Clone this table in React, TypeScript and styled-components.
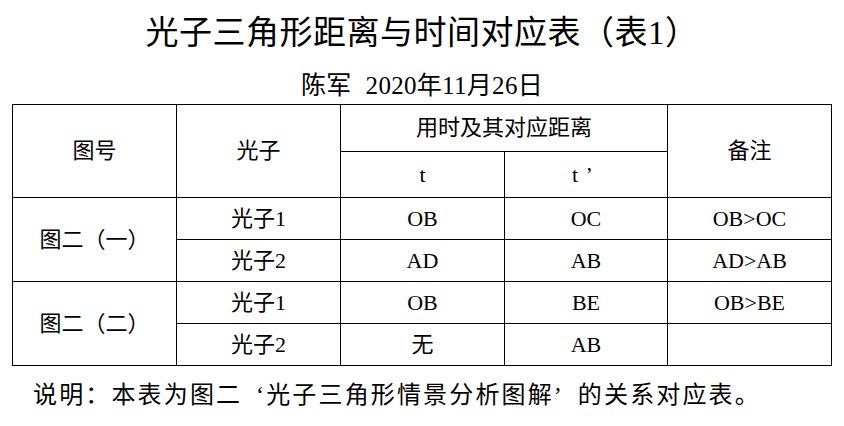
import styled, { createGlobalStyle } from 'styled-components';

const GlobalStyle = createGlobalStyle`
  html, body {
    margin: 0;
    padding: 0;
    background: #fff;
  }
  body {
    color: #000;
    font-family: 'Liberation Serif', 'Noto Sans CJK SC', serif;
  }
`;

const Page = styled.div`
  width: 844px;
  height: 426px;
  display: flex;
  flex-direction: column;
  align-items: center;
  overflow: hidden;
`;

const Title = styled.h1`
  margin: 12px 0 0;
  font-size: 33px;
  font-weight: 400;
  line-height: 42px;
  letter-spacing: 0.5px;
`;

const Byline = styled.div`
  margin-top: 17px;
  font-size: 25px;
  line-height: 30px;
  letter-spacing: 0.3px;
`;

const Gap = styled.span`
  display: inline-block;
  width: 14px;
`;

const Grid = styled.table`
  margin-top: 3px;
  width: 820px;
  border-collapse: collapse;
  table-layout: fixed;
  font-size: 22px;
`;

const Cell = styled.td<{ $h?: number }>`
  border: 1px solid #000;
  text-align: center;
  vertical-align: middle;
  padding: 0;
  height: ${p => p.$h ?? 41}px;
  line-height: 26px;
`;

// full-width quote mark, as a CJK font sets it
const Quote = styled.span<{ $align?: string }>`
  display: inline-block;
  width: 1em;
  text-align: ${p => p.$align ?? 'left'};
`;

const Note = styled.p`
  align-self: stretch;
  margin: 14px 0 0 33px;
  font-size: 24px;
  line-height: 30px;
  letter-spacing: 2.15px;
`;

const rows = [
  { group: '图二（一）', items: [['光子1', 'OB', 'OC', 'OB>OC'], ['光子2', 'AD', 'AB', 'AD>AB']] },
  { group: '图二（二）', items: [['光子1', 'OB', 'BE', 'OB>BE'], ['光子2', '无', 'AB', '']] },
];

export default function App() {
  return (
    <Page>
      <GlobalStyle />
      <Title>光子三角形距离与时间对应表（表1）</Title>
      <Byline>
        陈军<Gap />2020年11月26日
      </Byline>
      <Grid>
        <colgroup>
          <col style={{ width: 164 }} />
          <col style={{ width: 164 }} />
          <col style={{ width: 164 }} />
          <col style={{ width: 163 }} />
          <col style={{ width: 164 }} />
        </colgroup>
        <tbody>
          <tr>
            <Cell rowSpan={2}>图号</Cell>
            <Cell rowSpan={2}>光子</Cell>
            <Cell colSpan={2} $h={46}>用时及其对应距离</Cell>
            <Cell rowSpan={2}>备注</Cell>
          </tr>
          <tr>
            <Cell $h={45}>t</Cell>
            <Cell $h={45}>
              t<Quote $align="center">’</Quote>
            </Cell>
          </tr>
          {rows.map(r =>
            r.items.map((it, i) => (
              <tr key={r.group + i}>
                {i === 0 && <Cell rowSpan={2}>{r.group}</Cell>}
                {it.map((v, j) => (
                  <Cell key={j}>{v}</Cell>
                ))}
              </tr>
            )),
          )}
        </tbody>
      </Grid>
      <Note>
        说明：本表为图二<Quote $align="right">‘</Quote>光子三角形情景分析图解<Quote>’</Quote>的关系对应表。
      </Note>
    </Page>
  );
}
